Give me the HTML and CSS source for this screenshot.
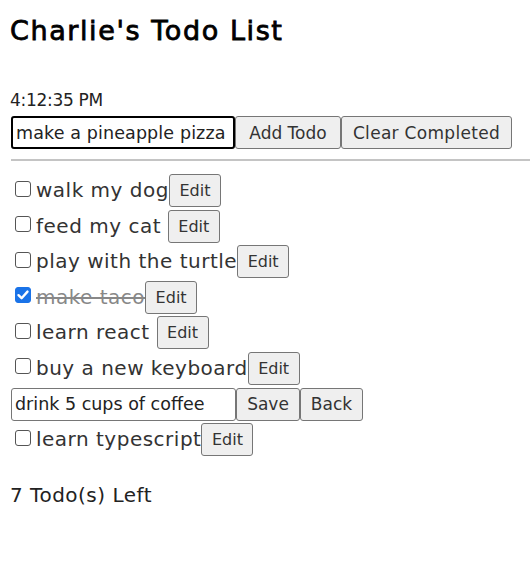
FILE: index.html
```html
<!DOCTYPE html>
<html>
<head>
<meta charset="utf-8">
<link rel="stylesheet" href="styles.css">
</head>
<body>
<h1 class="title">Charlie's Todo List</h1>
<div class="clock">4:12:35 PM</div>
<div class="add-row">
  <input class="add-input" type="text" value="make a pineapple pizza">
  <button class="btn btn-add">Add Todo</button>
  <button class="btn btn-clear">Clear Completed</button>
</div>
<hr class="divider">
<ul class="todos">
  <li class="todo"><span class="box"></span><span class="label">walk my dog</span><button class="btn btn-edit">Edit</button></li>
  <li class="todo"><span class="box"></span><span class="label">feed my cat </span><button class="btn btn-edit">Edit</button></li>
  <li class="todo"><span class="box"></span><span class="label">play with the turtle</span><button class="btn btn-edit">Edit</button></li>
  <li class="todo"><span class="box checked"><svg viewBox="0 0 16 16" width="16" height="16"><path d="M3.5 8.2 L6.6 11.2 L12.5 4.6" fill="none" stroke="#fff" stroke-width="2.4" stroke-linecap="round" stroke-linejoin="round"/></svg></span><span class="label done">make taco</span><button class="btn btn-edit">Edit</button></li>
  <li class="todo"><span class="box"></span><span class="label">learn react </span><button class="btn btn-edit">Edit</button></li>
  <li class="todo"><span class="box"></span><span class="label">buy a new keyboard</span><button class="btn btn-edit">Edit</button></li>
  <li class="todo editing"><input class="edit-input" type="text" value="drink 5 cups of coffee"><button class="btn btn-save">Save</button><button class="btn btn-back">Back</button></li>
  <li class="todo"><span class="box"></span><span class="label">learn typescript</span><button class="btn btn-edit">Edit</button></li>
</ul>
<div class="left">7 Todo(s) Left</div>
</body>
</html>
```
FILE: styles.css
```css
html, body {
  margin: 0;
  padding: 0;
  background: #fff;
}
body {
  font-family: "DejaVu Sans", "Open Sans", sans-serif;
  color: #222;
  padding: 0 0 0 10px;
}
.title {
  margin: 0;
  padding-top: 15px;
  font-size: 27px;
  font-weight: 400;
  letter-spacing: 1.6px;
  -webkit-text-stroke: 0.8px #000;
  color: #000;
  line-height: 32px;
  height: 32px;
}
.clock {
  margin-top: 43px;
  font-size: 17px;
  letter-spacing: -0.3px;
  line-height: 20px;
  color: #222;
}
.add-row {
  display: flex;
  margin-top: 6px;
  margin-left: 1px;
  height: 33px;
}
.add-input {
  box-sizing: border-box;
  width: 224px;
  height: 33px;
  border: 2px solid #000;
  border-radius: 3px;
  padding: 0 3px;
  font-family: inherit;
  font-size: 17.5px;
  letter-spacing: 0.12px;
  color: #222;
  outline: none;
}
.btn {
  box-sizing: border-box;
  height: 33px;
  background: #efefef;
  border: 1px solid #767676;
  border-radius: 3px;
  font-family: inherit;
  font-size: 17px;
  color: #333;
  padding: 0;
  margin: 0;
}
.btn-add { width: 106px; }
.btn-clear { width: 171px; letter-spacing: 0.3px; }
.divider {
  margin: 10px 0 0 1px;
  border: 0;
  border-top: 2px solid #c4c4c4;
  height: 0;
}
.todos {
  list-style: none;
  margin: 13px 0 0;
  padding: 0;
}
.todo {
  display: flex;
  align-items: center;
  height: 33px;
  margin-bottom: 2.6px;
}
.box {
  box-sizing: border-box;
  width: 16px;
  height: 16px;
  border: 1px solid #555;
  border-radius: 3px;
  margin: -4px 5px 0 5px;
  flex: none;
}
.box.checked {
  background: #1a73e8;
  border-color: #1a73e8;
}
.box svg { display: block; margin: -1px; }
.label {
  font-size: 20px;
  letter-spacing: 0.5px;
  color: #333;
  white-space: pre;
  margin-top: -1px;
}
.label.done {
  text-decoration: line-through;
  color: #888;
}
.btn-edit {
  width: 52px;
  font-size: 16px;
}
.editing { margin-left: 1px; }
.edit-input {
  box-sizing: border-box;
  width: 225px;
  height: 33px;
  border: 1px solid #767676;
  border-radius: 3px;
  padding: 0 3px;
  font-family: inherit;
  font-size: 17.5px;
  color: #222;
  outline: none;
}
.btn-save { width: 64px; }
.btn-back { width: 63px; }
.left {
  margin-top: 27px;
  font-size: 20px;
  letter-spacing: 0.5px;
  color: #222;
}
```
